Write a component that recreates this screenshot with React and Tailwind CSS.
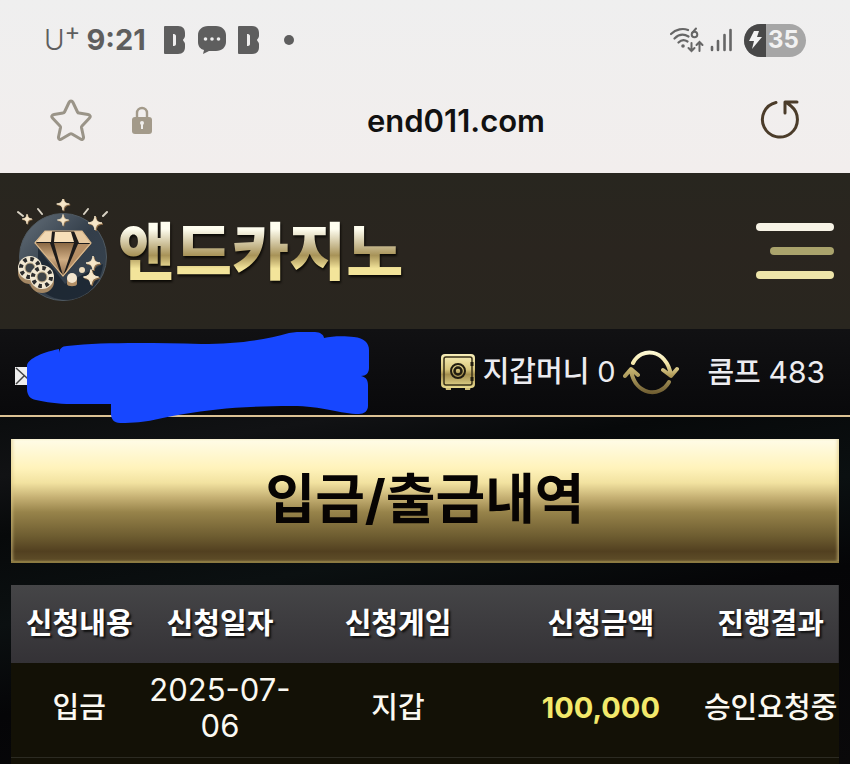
const FONT = "font-['Inter','Noto_Sans_CJK_KR',sans-serif]";

const rows = [
  { type: "입금", date: "2025-07-06", game: "지갑", amount: "100,000", status: "승인요청중" },
];

function BadgeB() {
  return (
    <svg viewBox="0 0 22 28" className="h-7 w-[22px]" fill="#5e5e5e" aria-hidden="true">
      <path
        fillRule="evenodd"
        d="M1 0h13c5 0 7 3 7 7v3c0 2-2 3-2 4s2 2 2 4v3c0 4-2 7-7 7H1a1 1 0 0 1-1-1V1a1 1 0 0 1 1-1ZM9 8v12h1c1 0 2-1 2-2v-8c0-1-1-2-2-2Z"
      />
    </svg>
  );
}

function StatusBar() {
  return (
    <div className="flex h-20 items-center justify-between pr-11 pl-11 text-[#5e5e5e]">
      <div className="flex items-center">
        <span className="flex items-start text-[28px] leading-8 font-light">
          U<span className="text-[24px] leading-4 font-normal">+</span>
        </span>
        <span className="ml-[6px] text-[29px] leading-8 font-bold">9:21</span>
        <span className="ml-[18px] flex items-center gap-3">
          <BadgeB />
          <svg viewBox="0 0 28 28" className="size-7" aria-hidden="true">
            <path
              d="M10 0h8c6 0 10 4 10 9v7c0 5-4 9-10 9h-7l-6 3 1-4c-4-1-6-4-6-8V9c0-5 4-9 10-9Z"
              fill="#5e5e5e"
            />
            <circle cx="7.500" cy="13" r="1.800" fill="#efefef" />
            <circle cx="14" cy="13" r="1.800" fill="#efefef" />
            <circle cx="20.500" cy="13" r="1.800" fill="#efefef" />
          </svg>
          <BadgeB />
        </span>
        <span className="ml-6 size-[10px] rounded-full bg-[#5e5e5e]" />
      </div>

      <div className="flex items-center">
        <svg viewBox="0 0 34 26" className="h-[26px] w-[34px]" fill="none" stroke="#666" strokeWidth="2.2" strokeLinecap="round" aria-hidden="true">
          <path d="M1 7C6 2 13 1 18 3M4.500 11.500c4-4 9-5 14-2M8.500 15.500c3-3 6-3 9-1" />
          <circle cx="13" cy="19" r="1.800" fill="#666" stroke="none" />
          <path d="M26 1.500 22.200 6" strokeWidth="2" />
          <circle cx="24.500" cy="7.500" r="2.800" strokeWidth="2" />
          <path d="M21.500 16v8m-3-3 3 3 3-3M29.500 24v-9m-3 3 3-3 3 3" strokeWidth="2" />
        </svg>
        <svg viewBox="0 0 22 24" className="ml-[6px] h-6 w-[22px]" stroke="#666" strokeWidth="2.600" strokeLinecap="round" aria-hidden="true">
          <path d="M2 19v3M8 13v9M14.500 7v15M20.500 2v20" />
        </svg>
        <div className="ml-3 flex h-[33px] w-[62px] items-center overflow-hidden rounded-full bg-[#a6a6a6]">
          <span className="flex h-full w-[22px] items-center justify-end bg-[#484848] pr-1">
            <svg viewBox="0 0 13 18" className="h-[18px] w-[13px]" fill="#f4f4f4" aria-hidden="true">
              <path d="M5 0h5L8 6h5L3 18l2-8H0Z" />
            </svg>
          </span>
          <span className="ml-[2px] text-[24px] leading-8 font-bold text-[#f2f2f2]">35</span>
        </div>
      </div>
    </div>
  );
}

function AddressBar() {
  return (
    <div className="flex h-[93px] items-center pr-[50px] pb-[13px] pl-[50px]">
      <button type="button" aria-label="북마크">
        <svg viewBox="0 0 42 42" className="size-[42px]" fill="none" stroke="#9a9488" strokeWidth="3" strokeLinejoin="round" aria-hidden="true">
          <path d="M19 3.500c1-2 3-2 4 0l4.500 9.500c.3.600.8 1 1.500 1l9 1.500c2 .3 3 2 1.500 3.500L32 27c-.5.500-.6 1-.5 1.600L33.500 38c.3 2-1.500 3-3 2l-8.500-5c-.6-.3-1.400-.3-2 0l-8.500 5c-1.500 1-3.300 0-3-2l2-9.400c.1-.6 0-1.100-.5-1.600L2.500 19C1 17.500 2 15.800 4 15.500l9-1.500c.7 0 1.200-.4 1.500-1Z" />
        </svg>
      </button>
      <svg viewBox="0 0 20 28" className="ml-10 h-7 w-5" aria-hidden="true">
        <path d="M5 12V7a5 5 0 0 1 10 0v5" fill="none" stroke="#a39a8a" strokeWidth="2.400" />
        <rect y="11" width="20" height="17" rx="3" fill="#a39a8a" />
        <circle cx="10" cy="17" r="2" fill="#f0eeec" />
        <path d="M9 17h2v6H9Z" fill="#f0eeec" />
      </svg>
      <span className="flex-1 pt-[2px] text-center text-[31px] leading-10 font-semibold text-[#111]">end011.com</span>
      <button type="button" aria-label="새로고침">
        <svg viewBox="0 0 40 42" className="h-[42px] w-10" fill="none" stroke="#4b3c2a" strokeWidth="3" strokeLinecap="round" strokeLinejoin="round" aria-hidden="true">
          <path d="M16 3.500A17.500 17.500 0 1 0 31 7L26 3M25 14V3h12" />
        </svg>
      </button>
    </div>
  );
}

const star = "M0-7C1-2 2-1 7 0C2 1 1 2 0 7C-1 2-2 1-7 0C-2-1-1-2 0-7Z";
const sparkles = [
  [63, 204, 0.9],
  [27, 219, 0.7],
  [95, 223, 1],
  [63, 220, 0.8],
  [93, 263, 1],
  [91, 277, 1.1],
];

function Chip({ x, y }) {
  return (
    <g transform={`translate(${x} ${y})`}>
      <ellipse cy="5" rx="12" ry="11" fill="#a48763" />
      <circle r="12" fill="#f1e8d3" />
      <circle r="9" fill="none" stroke="#2b2c2d" strokeWidth="4" strokeDasharray="3.500 3.570" />
      <circle r="5" fill="#3e4448" stroke="#c1ad88" />
    </g>
  );
}

function Emblem() {
  return (
    <svg viewBox="16 199 92 104" className="h-[104px] w-[92px] shrink-0" aria-hidden="true">
      <defs>
        <linearGradient id="disc" x1="0" y1="0" x2="1" y2="1">
          <stop offset="0" stopColor="#66717b" />
          <stop offset="0.5" stopColor="#333e4a" />
          <stop offset="1" stopColor="#37434f" />
        </linearGradient>
        <linearGradient id="gem" x1="0" y1="0" x2="0" y2="1">
          <stop offset="0" stopColor="#8a6844" />
          <stop offset="0.5" stopColor="#d0ad83" />
          <stop offset="1" stopColor="#8b694a" />
        </linearGradient>
      </defs>
      <circle cx="63" cy="257" r="43.500" fill="url(#disc)" stroke="#4f5961" />
      <path d="m38 248 27 36 38-20c-2 20-15 34-35 36-14 0-24-6-30-14Z" fill="#15202b" opacity="0.7" />
      <path d="M45 231h37l9 13-28 33-28-33Z" fill="#1d1b1b" />
      <path d="M45 231h7l-1 11H35Z" fill="#f2d9b4" />
      <path d="M55 232h16l3 10H54Z" fill="#f7dfb9" />
      <path d="M74 231h8l9 12H79Z" fill="#e7c9a0" />
      <path d="M35 243h15l10 29Z" fill="url(#gem)" />
      <path d="M54 243h20l-11 33Z" fill="url(#gem)" />
      <path d="M78 244h13l-26 30Z" fill="#b68f66" />
      <path d="M35 243 45 231h37l9 12-28 33Z" fill="none" stroke="#d9b88c" strokeWidth="1.200" />
      <path d="m18 212 5 4M38 209l4 5M88 209l-4 5M107 212l-4 4" stroke="#d8d2c4" strokeWidth="2" strokeLinecap="round" />
      {sparkles.map(([x, y, scale]) => (
        <g key={`${x}-${y}`} transform={`translate(${x} ${y}) scale(${scale})`}>
          <path d={star} transform="translate(1 1)" fill="#8d6d48" stroke="#8d6d48" />
          <path d={star} fill="#f6e6c8" stroke="#f6e6c8" />
        </g>
      ))}
      <path d="M67 278v6c0 3 10 3 10 0v-6Z" fill="#b18e65" />
      <circle cx="72" cy="278" r="5" fill="#f4e6cf" />
      <circle cx="82" cy="270" r="3" fill="#eedcbe" />
      <Chip x={30} y={268} />
      <Chip x={42} y={277} />
    </svg>
  );
}

function SiteHeader() {
  return (
    <header className="flex h-[156px] items-center justify-between bg-linear-to-b from-[#28261f] via-[#2a251f] to-[#29261f] pr-4 pl-4">
      <a href="#home" className="flex items-center gap-[10px]">
        <Emblem />
        <span className="bg-linear-to-b from-[#fffef0] from-25% via-[#a89358] via-55% to-[#f3e49a] to-70% bg-clip-text pt-1 text-[62px] leading-[84px] font-black text-transparent drop-shadow-[1px_2px_1px_#0b0905]">
          앤드카지노
        </span>
      </a>
      <button type="button" aria-label="메뉴" className="flex w-[78px] flex-col items-end gap-4">
        <span className="h-2 w-full rounded-full bg-[#f7f3e6]" />
        <span className="h-2 w-16 rounded-full bg-[#aaa36c]" />
        <span className="h-2 w-full rounded-full bg-[#eee5a9]" />
      </button>
    </header>
  );
}

function SafeIcon() {
  return (
    <svg viewBox="0 0 34 36" className="h-9 w-[34px]" aria-hidden="true">
      <defs>
        <linearGradient id="safe" x1="0" y1="0" x2="0" y2="1">
          <stop offset="0" stopColor="#f8efb9" />
          <stop offset="0.45" stopColor="#d9c77d" />
          <stop offset="0.6" stopColor="#a48f4f" />
          <stop offset="1" stopColor="#eadc91" />
        </linearGradient>
      </defs>
      <path d="M4 32h6v4H5ZM24 32h6l-1 4h-5Z" fill="#cdbb77" />
      <rect width="34" height="34" rx="4" fill="url(#safe)" />
      <rect x="3" y="3" width="28" height="28" rx="2" fill="none" stroke="#383018" strokeWidth="1.500" />
      <circle cx="17" cy="17" r="7" fill="none" stroke="#211c10" strokeWidth="2" />
      <circle cx="17" cy="17" r="3.500" fill="none" stroke="#211c10" strokeWidth="2.500" />
      <path d="M31 8v4M31 23v4" stroke="#211c10" strokeWidth="3" />
    </svg>
  );
}

function SyncIcon() {
  return (
    <svg viewBox="0 0 56 46" className="h-[46px] w-14" fill="none" strokeWidth="4" strokeLinecap="round" strokeLinejoin="round" aria-hidden="true">
      <defs>
        <linearGradient id="syncTop" gradientUnits="userSpaceOnUse" x1="0" y1="2" x2="0" y2="27">
          <stop offset="0" stopColor="#fffbd8" />
          <stop offset="0.5" stopColor="#f3e6a9" />
          <stop offset="1" stopColor="#ad9755" />
        </linearGradient>
        <linearGradient id="syncBottom" gradientUnits="userSpaceOnUse" x1="0" y1="20" x2="0" y2="45">
          <stop offset="0" stopColor="#c7b571" />
          <stop offset="1" stopColor="#6d5b30" />
        </linearGradient>
      </defs>
      <path d="M10 14C18-2 43-1 48 26M40 21l8 6 6-7" stroke="url(#syncTop)" />
      <path d="M46 33C37 49 13 47 8 22M2 27l6-7 7 6" stroke="url(#syncBottom)" />
    </svg>
  );
}

function UserBar() {
  return (
    <div className="relative flex h-[88px] items-center justify-between border-b-2 border-[#dcc294] bg-linear-to-b from-[#111113] to-[#09090b] pr-[25px] pl-[15px]">
      <svg viewBox="0 0 24 18" className="mt-2 h-[18px] w-6" aria-hidden="true">
        <rect width="24" height="18" fill="#eee" />
        <path d="m1 1 11 10L23 1M1 17l8-8" fill="none" stroke="#444" strokeWidth="1.500" />
      </svg>
      <svg viewBox="27 332 343 92" className="absolute top-[3px] left-[27px] h-[92px] w-[343px]" fill="#1747ff" aria-hidden="true">
        <path d="M59 354c0-5 3-8 8-8 38-4 86-3 134-2 36 0 64-4 88-11 11-2 20-1 26-1 5 0 9 3 9 6 8-2 21-2 30-1 10 1 15 6 15 13v18c0 5-3 8-8 8 5 1 7 4 7 9v21c0 5-4 8-9 8-18 0-37-8-67-8-50 0-78 3-108 8-25 4-35 9-64 9-6 0-9-4-9-9v-10H72c-15 0-26-2-36-4-6-1-9-5-9-11v-23c0-6 12-13 32-17Z" />
      </svg>
      <div className="flex items-center text-[29px] leading-10 font-medium text-[#ececf0]">
        <SafeIcon />
        <span className="mr-2 ml-2">
          지갑머니 <span className="font-normal">0</span>
        </span>
        <button type="button" aria-label="지갑머니 갱신">
          <SyncIcon />
        </button>
        <span className="ml-7">
          콤프 <span className="text-[30px] font-normal">483</span>
        </span>
      </div>
    </div>
  );
}

function HistoryTable() {
  return (
    <table className="mt-[22px] w-full table-fixed text-center text-[29px] leading-9">
      <colgroup>
        <col className="w-[16%]" />
        <col className="w-[18%]" />
        <col className="w-[25%]" />
        <col className="w-[24%]" />
        <col className="w-[17%]" />
      </colgroup>
      <thead className="bg-linear-to-b from-[#454547] to-[#343236] text-white text-shadow-[2px_2px_2px_#111]">
        <tr className="h-[78px] whitespace-nowrap *:pl-1">
          <th scope="col">신청내용</th>
          <th scope="col">신청일자</th>
          <th scope="col">신청게임</th>
          <th scope="col">신청금액</th>
          <th scope="col">진행결과</th>
        </tr>
      </thead>
      <tbody className="bg-[#131106] text-[#fbf9f2]">
        {rows.map((row) => (
          <tr key={row.date} className="h-[94px] border-b border-[#2c2b22] *:pb-1 *:pl-1">
            <td className="font-medium">{row.type}</td>
            <td className="text-[31px]">{row.date}</td>
            <td className="font-medium">{row.game}</td>
            <td className="font-bold text-[#f3e96b]">{row.amount}</td>
            <td className="font-medium whitespace-nowrap">{row.status}</td>
          </tr>
        ))}
        <tr className="h-[7px]">
          <td colSpan={5} />
        </tr>
      </tbody>
    </table>
  );
}

export default function App() {
  return (
    <div className={`flex min-h-screen flex-col bg-[#08090b] ${FONT}`}>
      <div className="bg-linear-to-b from-[#efefef] to-[#f2eeed]">
        <StatusBar />
        <AddressBar />
      </div>
      <SiteHeader />
      <UserBar />
      <main className="flex-1 bg-[linear-gradient(170deg,#0b0d0e_0%,#111214_12%,#07090a_24%,#0b1011_42%,#050507_60%,#0a090a_100%)] px-[11px] pt-[22px]">
        <h1 className="flex h-[124px] items-center justify-center border-b-2 border-[#8c7a42] bg-[linear-gradient(to_bottom,#fffce8_0%,#fff3bb_24%,#f2e2a0_36%,#c5b073_48%,#97834a_60%,#6d5c30_80%,#524020_92%,#5e4d28_100%)] text-[54px] leading-[72px] font-bold text-[#070403] shadow-[inset_3px_0_3px_-1px_#d9c68488,inset_-3px_0_3px_-1px_#d9c68488]">
          입금/출금내역
        </h1>
        <HistoryTable />
      </main>
    </div>
  );
}
